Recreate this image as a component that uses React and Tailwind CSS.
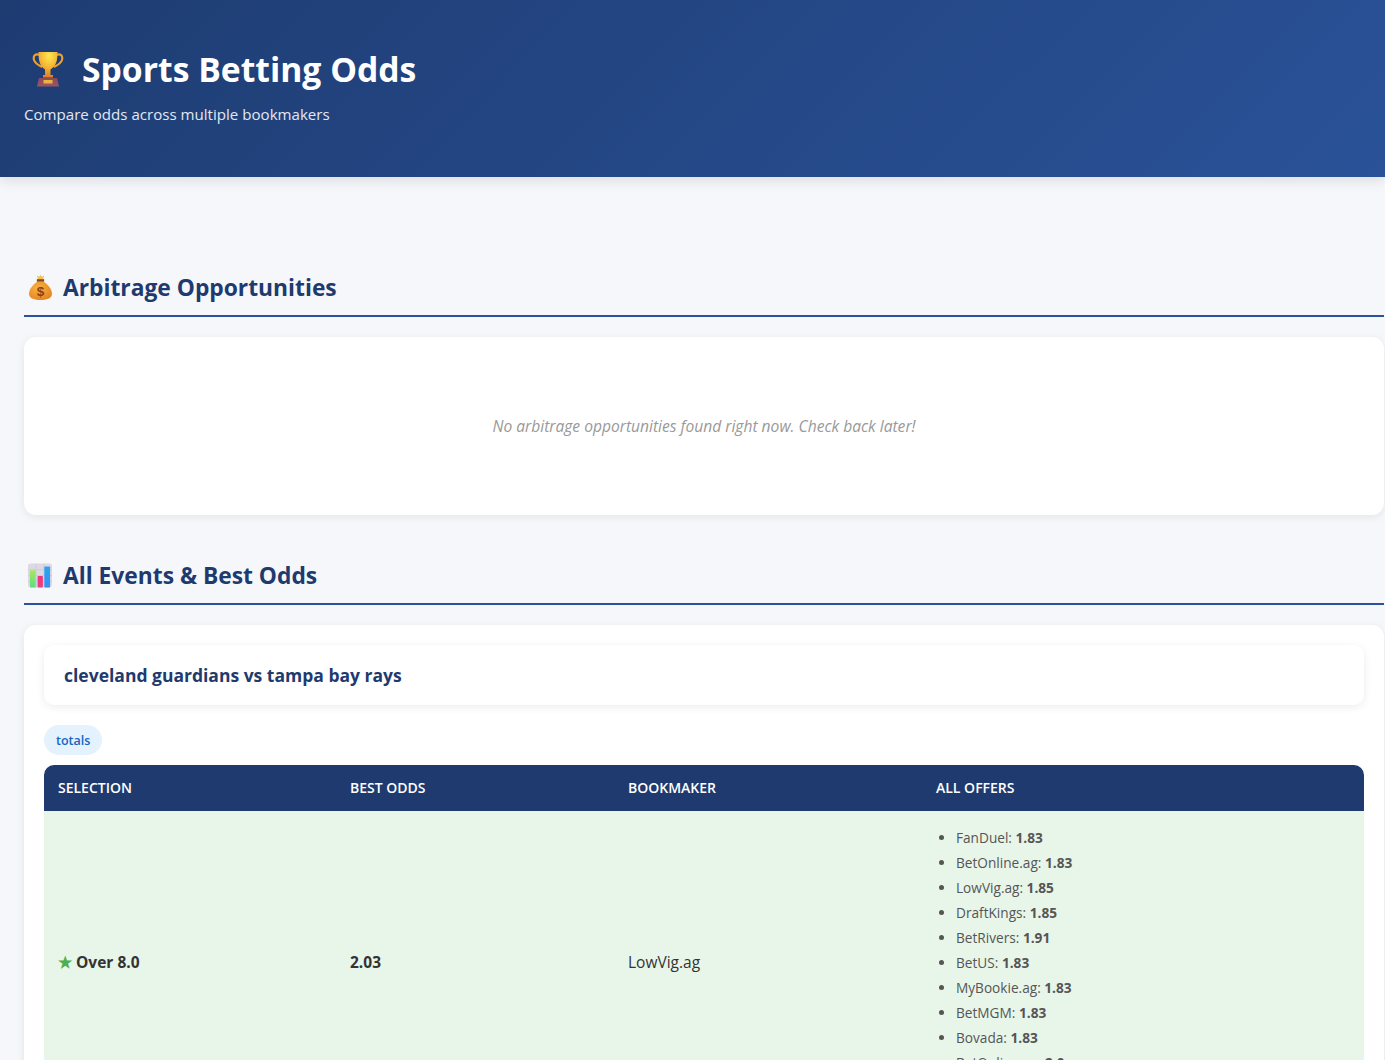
const offers = [
  ["FanDuel", "1.83"],
  ["BetOnline.ag", "1.83"],
  ["LowVig.ag", "1.85"],
  ["DraftKings", "1.85"],
  ["BetRivers", "1.91"],
  ["BetUS", "1.83"],
  ["MyBookie.ag", "1.83"],
  ["BetMGM", "1.83"],
  ["Bovada", "1.83"],
  ["BetOnline.ag", "2.0"],
];

function Trophy() {
  return (
    <svg width="32" height="36" viewBox="0 0 32 36" fill="none">
      <defs>
        <radialGradient id="cup" cx="0.55" cy="0.15" r="0.85">
          <stop offset="0" stopColor="#ffe94f" />
          <stop offset="0.55" stopColor="#f5b335" />
          <stop offset="1" stopColor="#dd7f22" />
        </radialGradient>
        <linearGradient id="plinth" x1="0" y1="0" x2="0" y2="1">
          <stop offset="0" stopColor="#8d4a5c" />
          <stop offset="1" stopColor="#9a5564" />
        </linearGradient>
      </defs>
      <path d="M8 4C3 2 1 5 2 9c1 3 4 5 8 7M24 4c5-2 7 1 6 5-1 3-4 5-8 7" stroke="#e9a02e" strokeWidth="2.200" />
      <path d="M6.500 1h19c0 8-1 14-7 17.500V24h2.500v2.500h-10V24H13v-5.500C7.500 15 6.500 9 6.500 1z" fill="url(#cup)" />
      <path d="M7 27h18l2 8.500H5z" fill="url(#plinth)" />
      <rect x="11.500" y="29" width="9" height="3.500" fill="#eeb33c" />
    </svg>
  );
}

function MoneyBag() {
  return (
    <svg width="23" height="25" viewBox="0 0 22 24">
      <defs>
        <radialGradient id="bag" cx="0.4" cy="0.35" r="0.8">
          <stop offset="0" stopColor="#f9b342" />
          <stop offset="1" stopColor="#e27d1f" />
        </radialGradient>
      </defs>
      <path d="M7.500 0.500l2 1.200L11 0l1.500 1.700 2-1.200-1 3.500h-5z" fill="#f7c04a" />
      <rect x="7.500" y="4" width="7" height="2.500" fill="#7a4a2a" />
      <path d="M8 6.500h6c4 2.500 8 7 8 11.500 0 4-4 6-11 6S0 22 0 18c0-4.500 4-9 8-11.500z" fill="url(#bag)" />
      <text x="11" y="20.500" textAnchor="middle" fontSize="13" fontWeight="700" fontFamily="Liberation Sans" fill="#8a3f14">$</text>
    </svg>
  );
}

function BarChart() {
  return (
    <svg width="25" height="25" viewBox="0 0 25 25">
      <defs>
        <linearGradient id="green" x1="0" y1="0" x2="0" y2="1">
          <stop offset="0" stopColor="#a6e85f" />
          <stop offset="1" stopColor="#5fdc84" />
        </linearGradient>
        <linearGradient id="pink" x1="0" y1="0" x2="0" y2="1">
          <stop offset="0" stopColor="#f0307f" />
          <stop offset="1" stopColor="#e9457c" />
        </linearGradient>
        <linearGradient id="blue" x1="0" y1="0" x2="0" y2="1">
          <stop offset="0" stopColor="#27a6f0" />
          <stop offset="1" stopColor="#3b8ff0" />
        </linearGradient>
      </defs>
      <rect width="25" height="25" rx="3" fill="#ddd9e4" />
      <path d="M8.500 0v25M16.500 0v25M0 6.500h25M0 12.500h25M0 18.500h25" stroke="#c9c4d2" strokeWidth="0.700" />
      <rect x="2" y="7" width="6" height="18" rx="0.800" fill="url(#green)" />
      <rect x="10" y="13" width="5.500" height="12" rx="0.800" fill="url(#pink)" />
      <rect x="17" y="3" width="6" height="22" rx="0.800" fill="url(#blue)" />
    </svg>
  );
}

function SectionTitle({ icon, children }) {
  return (
    <div className="flex h-[47px] items-start border-b-2 border-[#2a5298] pl-[4px] pt-[1px]">
      <div className="flex h-[32px] w-[24px] items-center justify-center">{icon}</div>
      <h2 className="ml-[11px] mt-[1px] text-[22.800px] leading-[32px] font-bold text-[#1e3a6e]">{children}</h2>
    </div>
  );
}

export default function App() {
  return (
    <div className="h-[1060px] overflow-hidden bg-[#f5f7fb] font-['Open_Sans','Noto_Sans',sans-serif]">
      {/* Header */}
      <header className="h-[177px] bg-[linear-gradient(135deg,#1e3c72_0%,#2a5298_100%)] pl-[24px] pt-[47px] shadow-[0_4px_12px_rgba(0,0,0,0.1)]">
        <div className="flex h-[44px] items-center pl-[8px]">
          <Trophy />
          <h1 className="ml-[18px] text-[33.700px] leading-[44px] font-bold text-white">Sports Betting Odds</h1>
        </div>
        <p className="mt-[11px] text-[15.100px] leading-[24px] text-[#e3e8f2]">Compare odds across multiple bookmakers</p>
      </header>

      <main className="ml-[24px] w-[1360px] pt-[93px]">
        {/* Arbitrage */}
        <SectionTitle icon={<MoneyBag />}>Arbitrage Opportunities</SectionTitle>
        <div className="mt-[20px] flex h-[178px] items-center justify-center rounded-[12px] bg-white pt-[2px] shadow-[0_2px_8px_rgba(0,0,0,0.08)]">
          <p className="text-[15.600px] italic text-[#999999]">No arbitrage opportunities found right now. Check back later!</p>
        </div>

        {/* Events */}
        <div className="mt-[43px]">
          <SectionTitle icon={<BarChart />}>All Events &amp; Best Odds</SectionTitle>
        </div>
        <div className="mt-[20px] rounded-[12px] bg-white p-[20px] shadow-[0_2px_8px_rgba(0,0,0,0.08)]">
          <div className="flex h-[60px] items-center rounded-[10px] bg-white px-[20px] shadow-[0_2px_8px_rgba(0,0,0,0.08)]">
            <h3 className="text-[17.500px] font-bold text-[#1e3a6e]">cleveland guardians vs tampa bay rays</h3>
          </div>
          <span className="mt-[20px] block h-[30px] w-fit rounded-[15px] bg-[#e3f2fd] px-[12px] text-[12.500px] leading-[31px] font-semibold text-[#1565c0]">totals</span>

          <table className="mt-[10px] w-[1320px] table-fixed border-collapse">
            <thead>
              <tr className="h-[46px] bg-[#1e3a6e] text-left text-[14px] text-white">
                <th className="w-[292px] rounded-tl-[10px] pb-[2px] pl-[14px] font-semibold">SELECTION</th>
                <th className="w-[278px] pb-[2px] pl-[14px] font-semibold">BEST ODDS</th>
                <th className="w-[308px] pb-[2px] pl-[14px] font-semibold">BOOKMAKER</th>
                <th className="rounded-tr-[10px] pb-[2px] pl-[14px] font-semibold">ALL OFFERS</th>
              </tr>
            </thead>
            <tbody>
              <tr className="bg-[#e8f5e9] text-[15.500px] text-[#333333]">
                <td className="pl-[14px] font-bold">
                  <span className="text-[#4caf50]">★</span> Over 8.0
                </td>
                <td className="pl-[14px] font-bold">2.03</td>
                <td className="pl-[14px]">LowVig.ag</td>
                <td className="pt-[14px] pb-[40px] pl-[14px]">
                  <ul className="list-disc pl-[20px] text-[13.650px] text-[#555555]">
                    {offers.map(([book, odds], index) => (
                      <li key={index} className="h-[25px] leading-[25px]">
                        {book}: <strong className="font-bold">{odds}</strong>
                      </li>
                    ))}
                  </ul>
                </td>
              </tr>
            </tbody>
          </table>
        </div>
      </main>
    </div>
  );
}
